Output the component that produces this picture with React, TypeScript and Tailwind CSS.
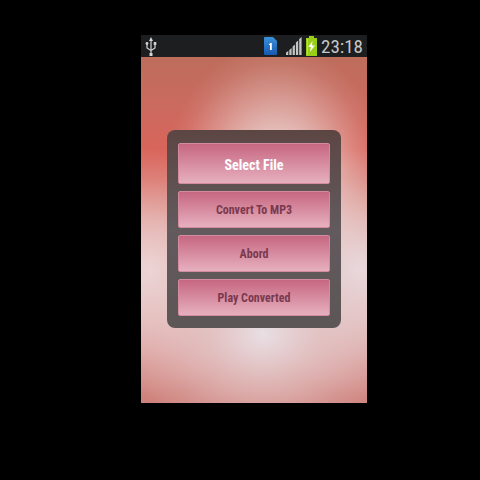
import type { ReactNode } from "react";

type Action = { label: string; primary?: boolean };

const actions: Action[] = [
  { label: "Select File", primary: true },
  { label: "Convert To MP3" },
  { label: "Abord" },
  { label: "Play Converted" },
];

function UsbIcon(): ReactNode {
  return (
    <svg className="h-5 w-3" viewBox="0 0 12 20" fill="none" stroke="#d4d4d4">
      <path d="M6 4v13M6 14.5 2 12V8M6 14.5l4-2.5V7" strokeWidth="1.2" />
      <path d="M6 1 4 5h4z" fill="#d4d4d4" stroke="none" />
      <circle cx="2" cy="7.5" r="1.4" fill="#d4d4d4" stroke="none" />
      <path d="M8.7 6h2.6v3H8.7zM4.5 17h3v3h-3z" fill="#d4d4d4" stroke="none" />
    </svg>
  );
}

function SimIcon(): ReactNode {
  return (
    <svg className="h-[18px] w-[13px]" viewBox="0 0 13 18">
      <defs>
        <linearGradient id="sim" x1="0" y1="0" x2="0" y2="1">
          <stop offset="0" stopColor="#3b92dc" />
          <stop offset="1" stopColor="#1759b0" />
        </linearGradient>
      </defs>
      <path d="M1 0h8l4 4v13a1 1 0 0 1-1 1H1a1 1 0 0 1-1-1V1a1 1 0 0 1 1-1z" fill="url(#sim)" />
      <path d="M5 7.5 6.3 6h1.5v7H6V8H5z" fill="#fff" />
    </svg>
  );
}

function SignalIcon(): ReactNode {
  return (
    <svg className="h-[18px] w-4" viewBox="0 0 16 18" fill="#c4c4c4">
      <path d="M0 15.5 2.3 14v4H0zM3.3 13l2.3-2v7H3.3zM6.6 9.5l2.3-2V18H6.6zM9.9 5.5l2.3-2V18H9.9zM13.2 2 15.6 0v18h-2.4z" />
    </svg>
  );
}

function BatteryIcon(): ReactNode {
  return (
    <svg className="h-5 w-[11px]" viewBox="0 0 11 20">
      <path d="M3 0h5v2h3v18H0V2h3z" fill="#9bce17" />
      <path d="M1 3h1v16H1z" fill="#b9e34a" />
      <path d="M6.5 5 2.2 11h2.7l-1 5 5-6.6H6z" fill="#fff" />
    </svg>
  );
}

function StatusBar(): ReactNode {
  return (
    <header className="flex h-[22px] items-center bg-[#1d1e1f] pl-1 pr-1">
      <UsbIcon />
      <div className="ml-auto flex items-center">
        <SimIcon />
        <span className="ml-[9px] flex">
          <SignalIcon />
        </span>
        <span className="ml-1 mr-1 flex">
          <BatteryIcon />
        </span>
        <time className="pt-0.5 text-[19px] leading-5 text-[#c6c8c9]">23:18</time>
      </div>
    </header>
  );
}

function ActionButton({ label, primary }: Action): ReactNode {
  return (
    <button
      type="button"
      className={
        primary
          ? "h-[41px] w-full rounded-[2px] border border-[#d58b9f] bg-linear-to-b from-[#c66782] to-[#e6b0bf] pt-0.5 text-sm font-bold text-white"
          : "h-[37px] w-full rounded-[2px] border border-[#d58b9f] bg-linear-to-b from-[#c66782] to-[#e6b0bf] text-xs font-bold text-[#7a394e]"
      }
    >
      {label}
    </button>
  );
}

export default function App(): ReactNode {
  return (
    <div className="min-h-screen bg-black pb-10 pl-7 pt-[35px] font-['Roboto_Condensed','Roboto',sans-serif]">
      <div className="mx-auto w-full max-w-[226px]">
        <StatusBar />
        <main className="bg-[#d98880] bg-[radial-gradient(ellipse_50%_40%_at_60%_36%,#eadcda_0%,#eadcdac0_35%,#eadcda50_68%,#eadcda18_86%,#eadcda00_100%),radial-gradient(ellipse_62%_34%_at_54%_80%,#e8dfe4_0%,#e5ccceb0_40%,#e5c8cb40_75%,#e5c8cb00_100%),radial-gradient(ellipse_50%_36%_at_4%_62%,#ecd5d5_0%,#ecd5d5a0_40%,#ecd5d530_75%,#ecd5d500_100%),radial-gradient(ellipse_46%_36%_at_96%_62%,#e8dadd_0%,#e8dadda0_40%,#e8dadd30_75%,#e8dadd00_100%),linear-gradient(#bd6d5c_0%,#cb6a5f_14%,#d9645a_28%,#d9746b_42%,#dda09b_66%,#d8948f_85%,#ce8079_100%)] px-[26px] pb-[75px] pt-[73px]">
          <section className="flex flex-col gap-[7px] rounded-lg bg-linear-to-b from-[#5c4644] via-[#625a5d] to-[#5d5656] px-[11px] pb-3 pt-[13px]">
            {actions.map((action) => (
              <ActionButton key={action.label} {...action} />
            ))}
          </section>
        </main>
      </div>
    </div>
  );
}
